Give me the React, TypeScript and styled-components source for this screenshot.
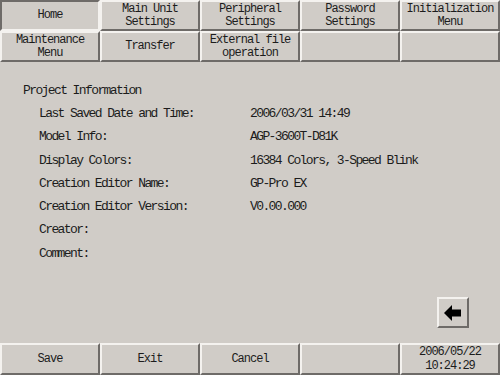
import styled, { createGlobalStyle } from "styled-components";

const GlobalStyle = createGlobalStyle`
    html, body {
        margin: 0;
        padding: 0;
        background: #d0ccc7;
    }
`;

const topTabs = [
    ["Home"],
    ["Main Unit", "Settings"],
    ["Peripheral", "Settings"],
    ["Password", "Settings"],
    ["Initialization", "Menu"],
    ["Maintenance", "Menu"],
    ["Transfer"],
    ["External file", "operation"],
    [],
    [],
];

const infoRows = [
    { label: "Last Saved Date and Time:", value: "2006/03/31 14:49" },
    { label: "Model Info:", value: "AGP-3600T-D81K" },
    { label: "Display Colors:", value: "16384 Colors, 3-Speed Blink" },
    { label: "Creation Editor Name:", value: "GP-Pro EX" },
    { label: "Creation Editor Version:", value: "V0.00.000" },
    { label: "Creator:", value: "" },
    { label: "Comment:", value: "" },
];

const ArrowIcon = () => (
    <svg width="18" height="16" viewBox="0 0 18 16">
        <polygon points="0,8 8,0 8,4.5 17,4.5 17,11.5 8,11.5 8,16" fill="#000" />
    </svg>
);

const App = () => {
    return (
        <Screen>
            <GlobalStyle />
            <TabGrid>
                {topTabs.map((lines, i) => (
                    <PanelButton key={i} pressed={i === 0}>
                        {lines.map((l) => (
                            <span key={l}>{l}</span>
                        ))}
                    </PanelButton>
                ))}
            </TabGrid>

            <Content>
                <SectionTitle>Project Information</SectionTitle>
                <InfoList>
                    {infoRows.map((row) => (
                        <InfoRow key={row.label}>
                            <Label>{row.label}</Label>
                            <Value>{row.value}</Value>
                        </InfoRow>
                    ))}
                </InfoList>
                <BackRow>
                    <BackButton>
                        <ArrowIcon />
                    </BackButton>
                </BackRow>
            </Content>

            <BottomBar>
                <PanelButton>Save</PanelButton>
                <PanelButton>Exit</PanelButton>
                <PanelButton>Cancel</PanelButton>
                <PanelButton />
                <PanelButton>
                    <span>2006/05/22</span>
                    <span>10:24:29</span>
                </PanelButton>
            </BottomBar>
        </Screen>
    );
};

const Screen = styled.div`
    width: 500px;
    height: 375px;
    display: flex;
    flex-direction: column;
    background: #d0ccc7;
    color: #1c1c1c;
    font-family: "Liberation Mono", "DejaVu Sans Mono", monospace;
    font-size: 13px;
    letter-spacing: -1.6px;
    overflow: hidden;
`;

const TabGrid = styled.div`
    display: grid;
    grid-template-columns: repeat(5, 100px);
    grid-template-rows: 31px 31px;
`;

const PanelButton = styled.div<{ pressed?: boolean }>`
    box-sizing: border-box;
    display: flex;
    flex-direction: column;
    align-items: center;
    justify-content: center;
    padding-top: 1px;
    font-size: 12px;
    letter-spacing: -1px;
    line-height: 13.5px;
    background: #d0ccc7;
    border-style: solid;
    border-width: 2px;
    border-color: ${(p) =>
        p.pressed
            ? "#6e6b68 #f4f2ef #f4f2ef #6e6b68"
            : "#f4f2ef #6e6b68 #6e6b68 #f4f2ef"};
    white-space: nowrap;
`;

const Content = styled.div`
    flex: 1;
    display: flex;
    flex-direction: column;
    padding: 17px 31px 15px 23px;
`;

const SectionTitle = styled.div`
    line-height: 23px;
`;

const InfoList = styled.div`
    display: flex;
    flex-direction: column;
    padding-left: 16px;
`;

const InfoRow = styled.div`
    display: grid;
    grid-template-columns: 211px 1fr;
    line-height: 23.3px;
`;

const Label = styled.span``;

const Value = styled.span``;

const BackRow = styled.div`
    flex: 1;
    display: flex;
    justify-content: flex-end;
    align-items: flex-end;
`;

const BackButton = styled.div`
    box-sizing: border-box;
    width: 32px;
    height: 31px;
    display: flex;
    align-items: center;
    justify-content: center;
    border-style: solid;
    border-width: 2px;
    border-color: #f4f2ef #6e6b68 #6e6b68 #f4f2ef;
`;

const BottomBar = styled.div`
    display: grid;
    grid-template-columns: repeat(5, 100px);
    height: 32px;
`;

export default App;
